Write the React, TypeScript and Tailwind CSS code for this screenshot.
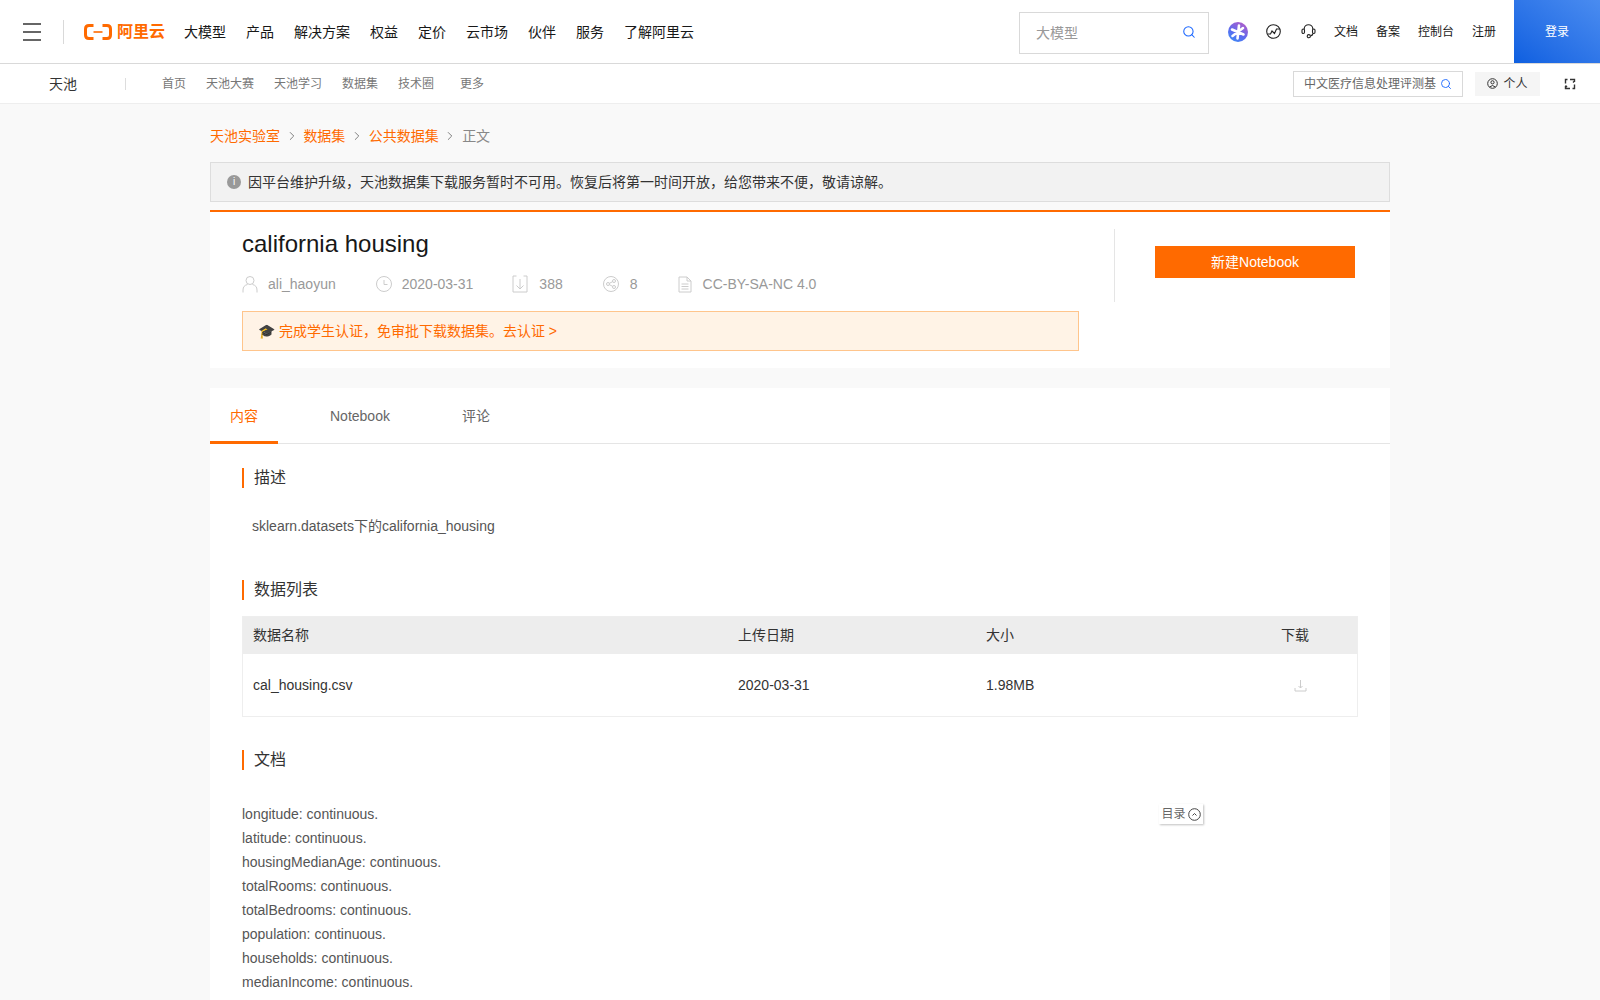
import { Search, ChevronRight } from 'lucide-react';

const NAV = ['大模型', '产品', '解决方案', '权益', '定价', '云市场', '伙伴', '服务', '了解阿里云'];
const SUBNAV = ['首页', '天池大赛', '天池学习', '数据集', '技术圈'];
const DOC_LINES = [
  'longitude: continuous.',
  'latitude: continuous.',
  'housingMedianAge: continuous.',
  'totalRooms: continuous.',
  'totalBedrooms: continuous.',
  'population: continuous.',
  'households: continuous.',
  'medianIncome: continuous.',
];

function SectionTitle({ children }: { children: string }) {
  return <h2 className="border-l-2 border-[#ff6a00] pl-[10px] text-base leading-5 text-[#333]">{children}</h2>;
}

function Crumb({ children }: { children: string }) {
  return <span className="text-[#ff6a00]">{children}</span>;
}

function Sep() {
  return <ChevronRight className="mx-[4.7px] h-[14px] w-[14px] text-[#666]" strokeWidth={1.4} />;
}

function Logo() {
  return (
    <div className="flex items-center gap-[5px] text-[#ff6a00]">
      <svg width="28" height="16" viewBox="0 0 28 16" fill="none">
        <path d="M9.5 1.5H5Q1.5 1.5 1.5 5V11Q1.5 14.5 5 14.5H9.5" stroke="currentColor" strokeWidth="3" />
        <path d="M18.5 1.5H23Q26.5 1.5 26.5 5V11Q26.5 14.5 23 14.5H18.5" stroke="currentColor" strokeWidth="3" />
        <rect x="9.5" y="7.2" width="9" height="1.6" fill="currentColor" />
      </svg>
      <span className="text-[16px] leading-none font-bold">阿里云</span>
    </div>
  );
}

export default function App() {
  return (
    <div className="h-[1000px] overflow-hidden bg-[#f9f9f9] font-['Liberation_Sans','Noto_Sans_CJK_SC',sans-serif]">
      <header className="flex h-[64px] items-center border-b border-[#d9d9d9] bg-white">
        <div className="ml-[23px] flex w-[18px] flex-col gap-[6px]">
          <span className="h-[2px] bg-[#666]" />
          <span className="h-[2px] bg-[#666]" />
          <span className="h-[2px] bg-[#666]" />
        </div>
        <span className="ml-[22px] h-[24px] w-px bg-[#d9d9d9]" />
        <div className="ml-[20px]"><Logo /></div>
        <nav className="ml-[19px] flex gap-[20px] text-sm text-[#181818]">
          {NAV.map(n => <span key={n}>{n}</span>)}
        </nav>
        <div className="ml-auto mt-[2px] flex h-[42px] w-[190px] items-center justify-between border border-[#d9d9d9] pl-[16px] pr-[12px] text-sm text-[#999]">
          大模型
          <Search className="mb-[2px] h-[14px] w-[14px] text-[#1a66ff]" strokeWidth={1.8} />
        </div>
        <svg className="ml-[19px]" width="20" height="20" viewBox="0 0 20 20">
          <defs>
            <linearGradient id="orb" x1="0.8" y1="0" x2="0.2" y2="1">
              <stop offset="0" stopColor="#b45cc8" />
              <stop offset="0.6" stopColor="#5a6cf0" />
              <stop offset="1" stopColor="#3f8cf5" />
            </linearGradient>
          </defs>
          <circle cx="10" cy="10" r="10" fill="url(#orb)" />
          <path d="M11 3.5L9.5 16.5M4 7.5L15.5 12.5M4.5 14L15 6" stroke="#fff" strokeWidth="2.6" strokeLinecap="round" />
        </svg>
        <svg className="ml-[18px]" width="15" height="15" viewBox="0 0 15 15" fill="none" stroke="#222" strokeWidth="1.1">
          <circle cx="7.5" cy="7.5" r="6.8" />
          <path d="M1.5 10L4.5 10L6 7L8.5 9.5L10.5 5L13.8 5" />
        </svg>
        <svg className="ml-[20px]" width="15" height="15" viewBox="0 0 15 15" fill="none" stroke="#222" strokeWidth="1.1">
          <path d="M3.2 5.5V5A4.3 4.3 0 0 1 11.8 5V5.5" />
          <rect x="1" y="5" width="2.5" height="4.5" rx="1.2" />
          <rect x="11.5" y="5" width="2.5" height="4.5" rx="1.2" />
          <path d="M12 9.5Q11.5 11.5 9.5 12" />
          <circle cx="7.8" cy="12.2" r="1.6" />
        </svg>
        <div className="ml-[18px] flex gap-[18px] text-xs text-[#181818]">
          <span>文档</span>
          <span>备案</span>
          <span>控制台</span>
          <span>注册</span>
        </div>
        <button className="ml-[18px] h-full w-[86px] bg-gradient-to-tr from-[#0d5fe0] to-[#4a8cf0] text-xs text-white">登录</button>
      </header>

      <div className="flex h-[40px] items-center border-b border-[#eee] bg-white">
        <span className="ml-[49px] text-sm text-[#333]">天池</span>
        <span className="ml-[48px] h-[12px] w-px bg-[#ddd]" />
        <nav className="ml-[36px] mt-[1px] flex gap-[20px] text-xs text-[#777]">
          {SUBNAV.map(n => <span key={n}>{n}</span>)}
          <span className="ml-[6px]">更多</span>
        </nav>
        <div className="ml-auto flex h-[26px] w-[170px] items-center justify-between border border-[#d9d9d9] pl-[10px] pr-[10px] text-xs text-[#666]">
          <span className="mt-[1px] overflow-hidden whitespace-nowrap">中文医疗信息处理评测基</span>
          <Search className="ml-[4px] h-[12px] w-[12px] shrink-0 text-[#1a66ff]" strokeWidth={1.8} />
        </div>
        <div className="ml-[12px] flex h-[24px] w-[65px] items-center justify-center gap-[5px] bg-[#f5f5f5] text-xs text-[#333]">
          <svg width="11" height="11" viewBox="0 0 11 11" fill="none" stroke="#333" strokeWidth="1">
            <circle cx="5.5" cy="5.5" r="4.8" />
            <circle cx="5.5" cy="4.3" r="1.6" />
            <path d="M2.7 9Q5.5 6 8.3 9" />
          </svg>
          <span className="mt-[1px]">个人</span>
        </div>
        <svg className="ml-[24px] mr-[24px]" width="12" height="12" viewBox="0 0 12 12" fill="none" stroke="#333" strokeWidth="1.4">
          <path d="M3.5 1.5H1.5V5.5M8.5 10.5H10.5V6.5M6 1.5H10.5V4M6 10.5H1.5V8M9 4.5L10.5 3M3 9L1.5 7.5" />
        </svg>
      </div>

      <main className="mx-auto w-[1180px]">
        <div className="flex h-[58px] items-center pt-[6px] text-sm text-[#888]">
          <Crumb>天池实验室</Crumb>
          <Sep />
          <Crumb>数据集</Crumb>
          <Sep />
          <Crumb>公共数据集</Crumb>
          <Sep />
          <span>正文</span>
        </div>

        <div className="flex h-[40px] items-center gap-[7px] border border-[#ddd] bg-[#f2f2f2] pl-[16px] text-sm text-[#333]">
          <span className="flex h-[14px] w-[14px] items-center justify-center rounded-full bg-[#999] text-[10px] leading-none text-white">i</span>
          因平台维护升级，天池数据集下载服务暂时不可用。恢复后将第一时间开放，给您带来不便，敬请谅解。
        </div>

        <section className="mt-[8px] flex h-[158px] border-t-2 border-[#ff6a00] bg-white pl-[32px]">
          <div className="w-[837px] pt-[16px]">
            <h1 className="text-2xl leading-8 text-[#181818]">california housing</h1>
            <div className="mt-[8px] flex h-[32px] items-center text-sm text-[#999]">
              <svg width="16" height="18" viewBox="0 0 16 18" fill="none" stroke="#ccc" strokeWidth="1">
                <circle cx="8" cy="5.5" r="4" />
                <path d="M1 17.5V15Q1 10.5 5.5 9.5M15 17.5V15Q15 10.5 10.5 9.5" />
              </svg>
              <span className="ml-[10px]">ali_haoyun</span>
              <svg className="ml-[40px]" width="16" height="16" viewBox="0 0 16 16" fill="none" stroke="#ccc" strokeWidth="1">
                <circle cx="8" cy="8" r="7.5" />
                <path d="M8 4V8.5H11.5" />
              </svg>
              <span className="ml-[10px]">2020-03-31</span>
              <svg className="ml-[39px]" width="16" height="18" viewBox="0 0 16 18" fill="none" stroke="#ccc" strokeWidth="1">
                <path d="M4.5 1H1V17H15V1H11.5M8 4V14M4.5 10.5L8 14L11.5 10.5" />
              </svg>
              <span className="ml-[11px]">388</span>
              <svg className="ml-[40px]" width="16" height="16" viewBox="0 0 16 16" fill="none" stroke="#ccc" strokeWidth="1">
                <circle cx="8" cy="8" r="7.5" />
                <circle cx="5" cy="8" r="1.5" />
                <circle cx="11" cy="5" r="1.5" />
                <circle cx="11" cy="11" r="1.5" />
                <path d="M6.4 7.3L9.6 5.7M6.4 8.7L9.6 10.3" />
              </svg>
              <span className="ml-[11px]">8</span>
              <svg className="ml-[40px]" width="14" height="17" viewBox="0 0 14 17" fill="none" stroke="#ccc" strokeWidth="1">
                <path d="M1 1H9L13 5V16H1ZM9 1V5H13M3.5 8H10.5M3.5 10.5H10.5M3.5 13H10.5" />
              </svg>
              <span className="ml-[11px]">CC-BY-SA-NC 4.0</span>
            </div>
            <div className="mt-[11px] flex h-[40px] items-center border border-[#ffc58c] bg-[#fff3e6] pl-[15px] text-sm text-[#ff6a00]">
              🎓 完成学生认证，免审批下载数据集。去认证 &gt;
            </div>
          </div>
          <div className="ml-[35px] mt-[17px] h-[73px] w-px bg-[#e5e5e5]" />
          <div className="ml-[40px] pt-[34px]">
            <button className="h-[32px] w-[200px] bg-[#ff6a00] text-sm text-white">新建Notebook</button>
          </div>
        </section>

        <section className="relative mt-[20px] bg-white pb-[40px]">
          <div className="flex h-[56px] border-b border-[#e5e5e5] text-sm text-[#666]">
            <span className="-mb-px flex w-[68px] items-center justify-center border-b-[3px] border-[#ff6a00] pt-[3px] text-[#ff6a00]">内容</span>
            <span className="ml-[52px] flex items-center">Notebook</span>
            <span className="ml-[72px] flex items-center">评论</span>
          </div>

          <div className="px-[32px]">
            <div className="pt-[24px]"><SectionTitle>描述</SectionTitle></div>
            <p className="mt-[28px] pl-[10px] text-sm leading-5 text-[#555]">sklearn.datasets下的california_housing</p>

            <div className="mt-[44px]"><SectionTitle>数据列表</SectionTitle></div>
            <div className="mt-[16px] border border-[#eee] text-sm text-[#333]">
              <div className="flex h-[37px] items-center bg-[#ededed] pb-[2px]">
                <span className="ml-[10px] w-[485px]">数据名称</span>
                <span className="w-[248px]">上传日期</span>
                <span className="w-[295px]">大小</span>
                <span>下载</span>
              </div>
              <div className="flex h-[62px] items-center">
                <span className="ml-[10px] w-[485px]">cal_housing.csv</span>
                <span className="w-[248px]">2020-03-31</span>
                <span className="w-[308px]">1.98MB</span>
                <svg width="13" height="13" viewBox="0 0 13 13" fill="none" stroke="#ccc" strokeWidth="1">
                  <path d="M6.5 1V9M4.5 7L6.5 9L8.5 7M1 9V12H12V9" />
                </svg>
              </div>
            </div>

            <div className="mt-[33px]"><SectionTitle>文档</SectionTitle></div>
            <div className="relative mt-[32px] text-sm leading-6 text-[#555]">
              {DOC_LINES.map(l => <p key={l}>{l}</p>)}
              <div className="absolute left-[917px] top-[2px] flex h-[20px] w-[44px] items-center justify-center gap-[2px] bg-white text-xs text-[#666] shadow-[1px_1px_2px_rgba(0,0,0,0.25)]">
                目录
                <svg width="13" height="13" viewBox="0 0 13 13" fill="none" stroke="#444" strokeWidth="1">
                  <circle cx="6.5" cy="6.5" r="5.8" />
                  <path d="M4.5 7.5L6.5 5.5L8.5 7.5" />
                </svg>
              </div>
            </div>
          </div>
        </section>
      </main>
    </div>
  );
}
